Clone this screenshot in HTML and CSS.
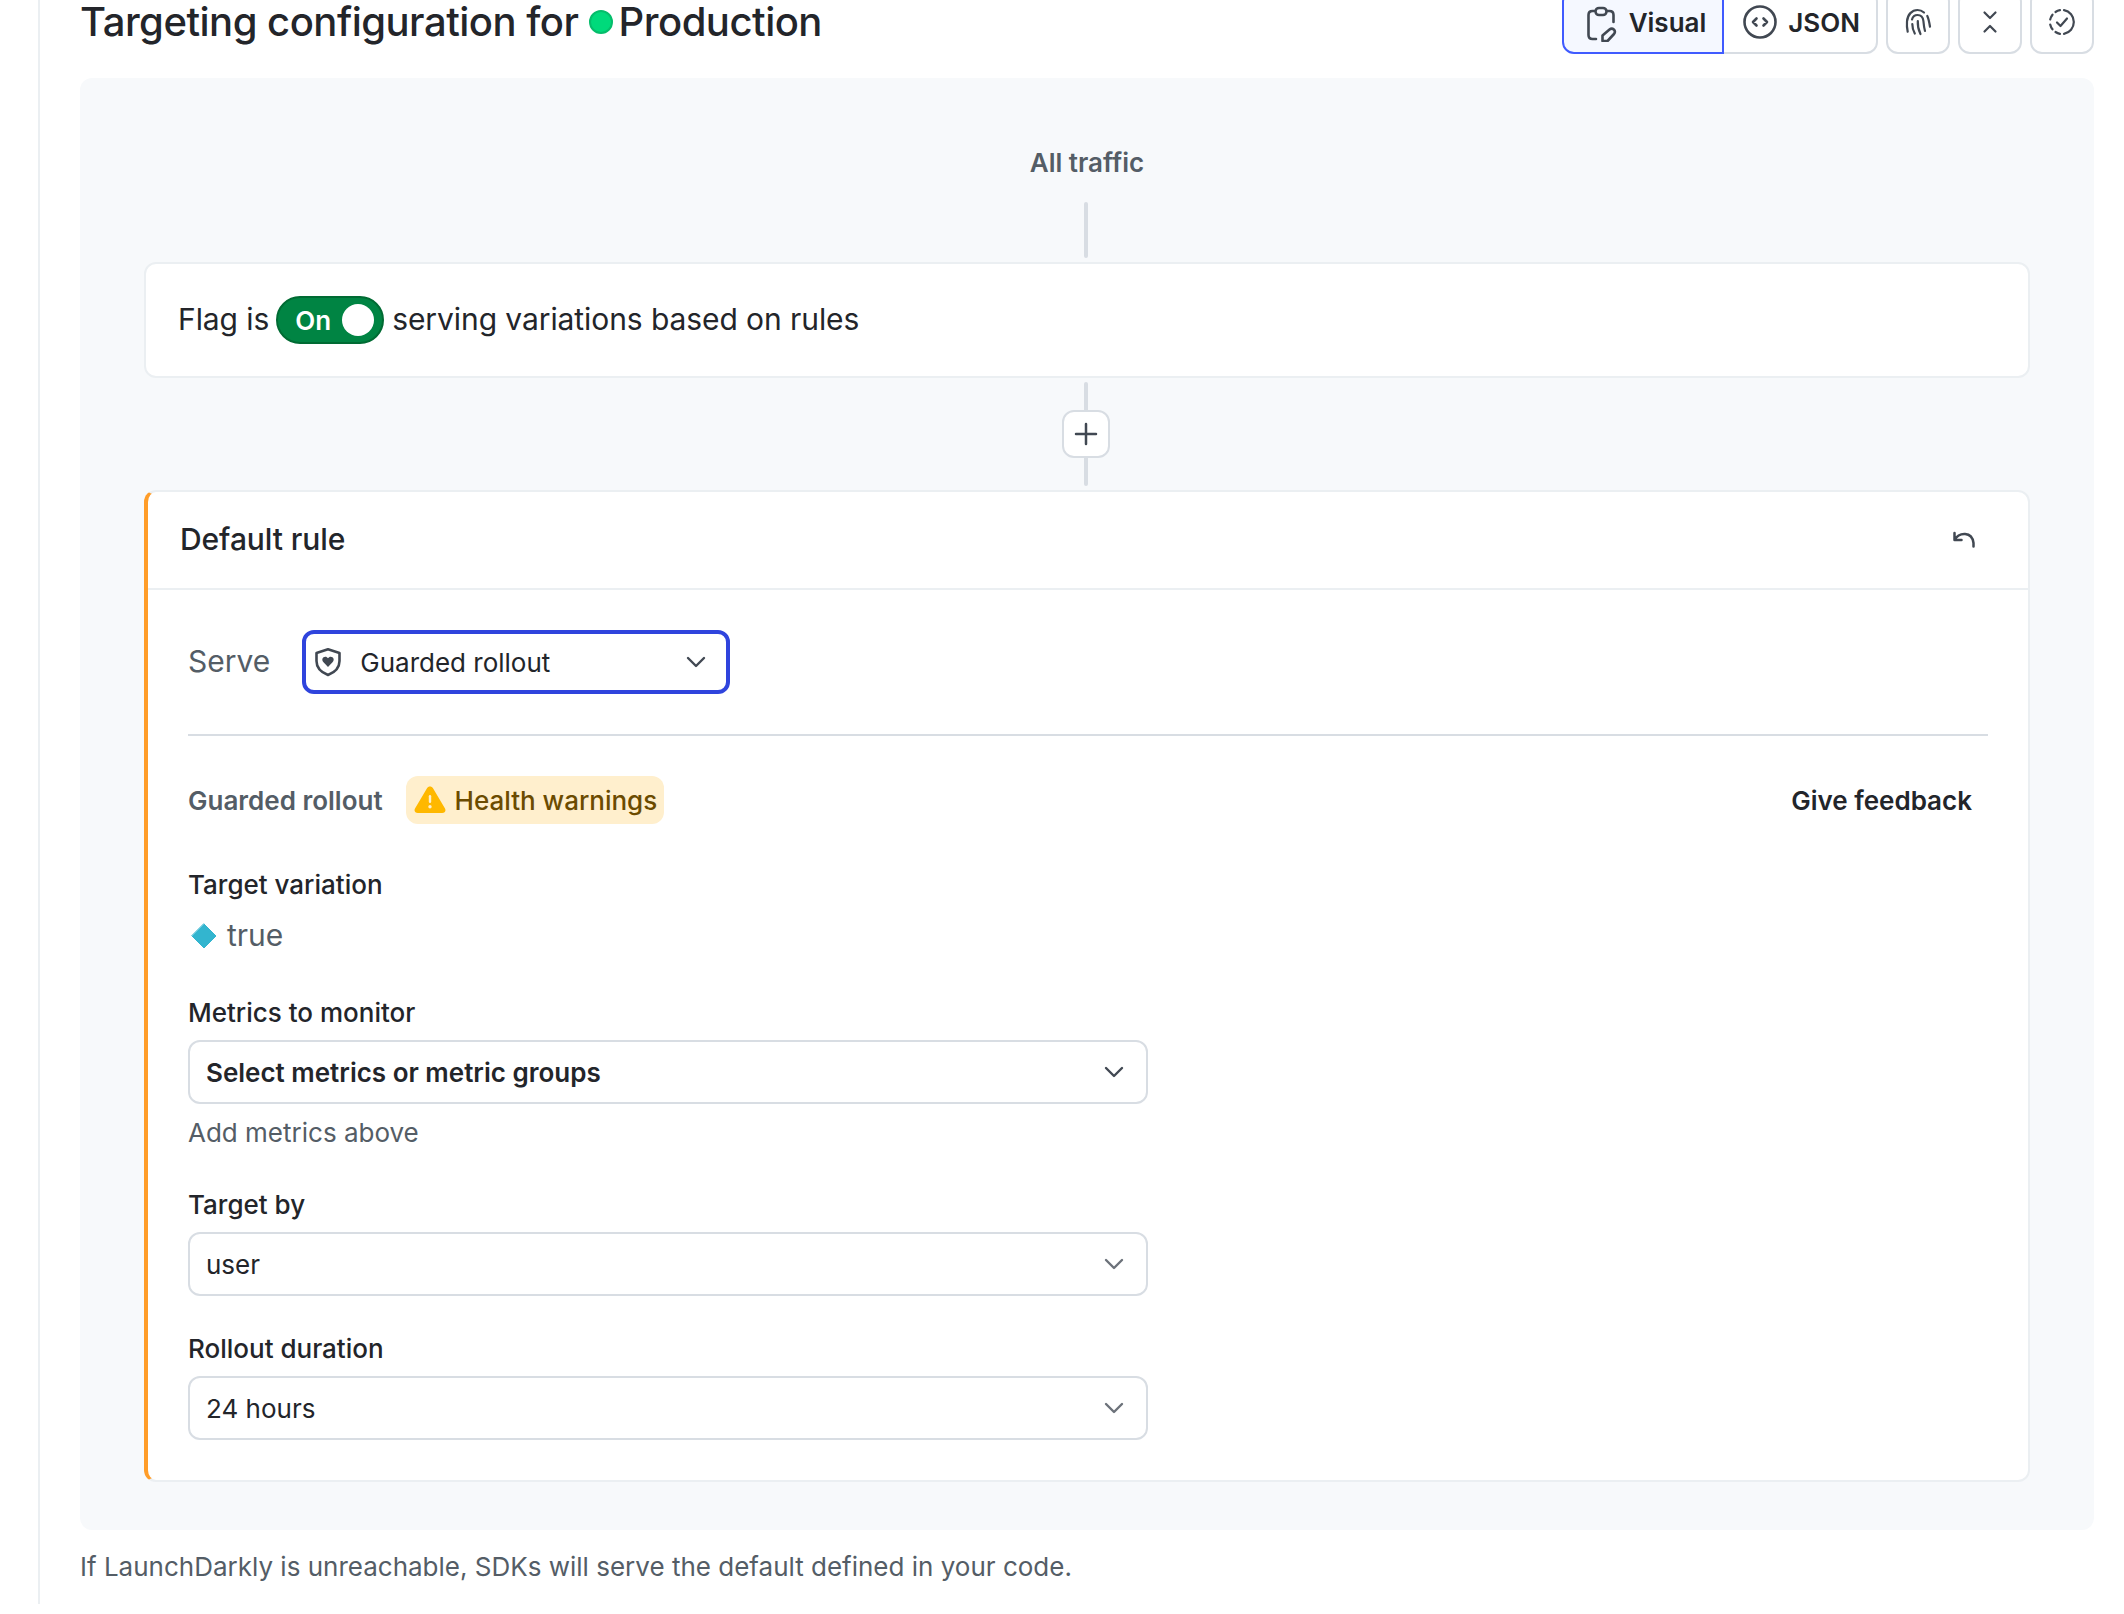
FILE: index.html
```html
<!DOCTYPE html>
<html lang="en">
<head>
  <meta charset="UTF-8">
  <meta name="viewport" content="width=device-width, initial-scale=1.0">
  <title>Targeting configuration</title>
  <link rel="stylesheet" href="styles.css">
</head>
<body>
  <main class="page">
    <header class="page-header">
      <h1>Targeting configuration for <span class="env-dot"></span>Production</h1>
      <div class="toolbar">
        <div class="view-switch">
          <button class="view view-active">
            <svg class="icon-view" viewBox="0 0 40 40">
              <path d="M13 9H11.500C9 9 7.500 10.500 7.500 13V33C7.500 35.500 9 37 11.500 37H15M26 9H28.500C31 9 32.500 10.500 32.500 13V20"/>
              <rect x="14.500" y="6" width="11" height="7" rx="3.500"/>
              <path d="M21.500 39V33.500L28.500 27.500C31.500 25 35.500 28.500 33 32L26.500 39Z"/>
            </svg>
            <span>Visual</span>
          </button>
          <button class="view">
            <svg class="icon-view" viewBox="0 0 40 40">
              <circle cx="20" cy="20" r="15.500"/>
              <path d="M16.500 16.500L13 20L16.500 23.500M23.500 16.500L27 20L23.500 23.500"/>
            </svg>
            <span>JSON</span>
          </button>
        </div>
        <button class="icon-button">
          <svg class="icon-tool" viewBox="0 0 32 32">
            <path d="M5.700 25.700C5 22.500 4.700 19 5 15.500C5.500 8.500 10 4 15.500 4C18 4 20.300 5 22 6.500M25.300 10C26.800 13 27.400 17 28 20.700"/>
            <path d="M10 13.500C10.800 10.500 13 9 15.500 9C19 9 21 11.500 21.400 15C21.700 18.500 22 21.500 23 25"/>
            <path d="M10.300 18C10.300 21.500 11.300 24.800 12.800 27.500M15.800 15C15.500 19.500 16.500 24 18.500 28"/>
          </svg>
        </button>
        <button class="icon-button">
          <svg class="icon-tool" viewBox="0 0 32 32">
            <path d="M10.500 6.500L16 12L21.500 6.500M10.500 25.500L16 20L21.500 25.500"/>
          </svg>
        </button>
        <button class="icon-button">
          <svg class="icon-tool" viewBox="0 0 32 32">
            <path d="M18 4.200A12 12 0 0 1 18 27.800M14 4.200A12 12 0 0 0 9.500 6M6.500 8.700A12 12 0 0 0 4.200 13.500M4.200 18.500A12 12 0 0 0 6.500 23.300M9.500 26A12 12 0 0 0 14 27.800"/>
            <path d="M11 16.500L14.500 20L21 12.500"/>
          </svg>
        </button>
      </div>
    </header>

    <section class="panel">
      <div class="traffic">All traffic</div>
      <div class="connector connector-top"></div>

      <div class="flag-card">
        <span class="flag-text">Flag is</span>
        <button class="toggle"><span>On</span><span class="knob"></span></button>
        <span class="flag-text">serving variations based on rules</span>
      </div>

      <div class="add-rule">
        <div class="connector connector-half"></div>
        <button class="add-button">
          <svg viewBox="0 0 24 24"><path d="M12 2V22M2 12H22"/></svg>
        </button>
        <div class="connector connector-half connector-end"></div>
      </div>

      <div class="rule-card">
        <div class="rule-header">
          <h2>Default rule</h2>
          <button class="undo">
            <svg viewBox="0 0 24 24"><path d="M2.500 5V12H9.500M2.500 12C7 4 20 3 21.500 15V18.500"/></svg>
          </button>
        </div>

        <div class="rule-body">
          <div class="serve">
            <span class="serve-label">Serve</span>
            <div class="select select-focus">
              <svg class="shield" viewBox="0 0 28 30">
                <path class="shield-line" d="M14 2.300L25.500 6V14C25.500 20.500 20.500 25.500 14 28C7.500 25.500 2.500 20.500 2.500 14V6Z"/>
                <path class="shield-heart" d="M14 20L9.500 15.300C7.800 13.500 8 11.200 9.500 10.200C11 9.200 13 9.500 14 11.200C15 9.500 17 9.200 18.500 10.200C20 11.200 20.200 13.500 18.500 15.300Z"/>
              </svg>
              <span>Guarded rollout</span>
              <svg class="chevron" viewBox="0 0 20 12"><path d="M2 2L10 10L18 2"/></svg>
            </div>
          </div>

          <div class="rollout-header">
            <h3>Guarded rollout</h3>
            <span class="badge">
              <svg class="warning" viewBox="0 0 32 28">
                <path class="warning-shape" d="M13 2.200C14.300 0 17.700 0 19 2.200L31 22.500C32.300 25 30.800 27 28.200 27H3.800C1.200 27 -0.300 25 1 22.500Z"/>
                <path class="warning-mark" d="M16 10.300V15.800"/>
                <circle cx="16" cy="20.800" r="1.700"/>
              </svg>
              <span>Health warnings</span>
            </span>
            <a class="feedback">Give feedback</a>
          </div>

          <div class="field">
            <div class="label">Target variation</div>
            <div class="variation">
              <svg class="diamond" viewBox="0 0 26 26"><path d="M13 1L25 13L13 25L1 13Z"/></svg>
              <span>true</span>
            </div>
          </div>

          <div class="field">
            <div class="label">Metrics to monitor</div>
            <div class="select">
              <strong>Select metrics or metric groups</strong>
              <svg class="chevron" viewBox="0 0 20 12"><path d="M2 2L10 10L18 2"/></svg>
            </div>
            <div class="hint">Add metrics above</div>
          </div>

          <div class="field">
            <div class="label">Target by</div>
            <div class="select">
              <span>user</span>
              <svg class="chevron chevron-light" viewBox="0 0 20 12"><path d="M2 2L10 10L18 2"/></svg>
            </div>
          </div>

          <div class="field">
            <div class="label">Rollout duration</div>
            <div class="select">
              <span>24 hours</span>
              <svg class="chevron chevron-light" viewBox="0 0 20 12"><path d="M2 2L10 10L18 2"/></svg>
            </div>
          </div>
        </div>
      </div>
    </section>

    <p class="footnote">If LaunchDarkly is unreachable, SDKs will serve the default defined in your code.</p>
  </main>
</body>
</html>
```

FILE: styles.css
```css
* {
  box-sizing: border-box;
}
body {
  margin: 0;
  background: #fff;
  color: #23252a;
  font-family: Inter, sans-serif;
  font-optical-sizing: none;
  font-size: 26px;
  line-height: 32px;
  overflow: hidden;
}
h1, h2, h3, p {
  margin: 0;
}
button {
  padding: 0;
  background: #fff;
  color: inherit;
  font: inherit;
}
svg {
  display: block;
  flex: none;
  fill: none;
  stroke: #414852;
  stroke-linecap: round;
  stroke-linejoin: round;
}
.page {
  height: 1614px;
  margin-left: 38px;
  padding: 0 30px 0 40px;
  border-left: 2px solid #ebeff2;
}

/* header */
.page-header {
  display: flex;
  justify-content: space-between;
  align-items: center;
  height: 64px;
  margin-top: -10px;
}
h1 {
  display: flex;
  align-items: center;
  font-size: 40px;
  font-weight: 500;
  letter-spacing: -0.5px;
  line-height: 48px;
  white-space: pre;
}
.env-dot {
  width: 24px;
  height: 24px;
  margin-right: 6px;
  border: 2px solid #05bd6b;
  border-radius: 50%;
  background: #00da7b;
}
.toolbar {
  display: flex;
  gap: 8px;
}
.view-switch {
  display: flex;
}
.view {
  display: flex;
  align-items: center;
  gap: 8px;
  height: 64px;
  padding: 0 16px;
  border: 2px solid #d8dde3;
  border-left: none;
  border-radius: 0 12px 12px 0;
  font-weight: 600;
}
.view-active {
  padding-left: 17px;
  border: 2px solid #405bff;
  border-radius: 12px 0 0 12px;
  background: #f5f8ff;
}
.view span,
.select span,
.select strong,
.badge span,
.toggle span:first-child {
  padding-top: 2px;
}
.icon-view {
  width: 40px;
  height: 40px;
  stroke-width: 2.6;
}
.icon-button {
  display: flex;
  align-items: center;
  justify-content: center;
  width: 64px;
  height: 64px;
  border: 2px solid #d8dde3;
  border-radius: 12px;
}
.icon-tool {
  width: 32px;
  height: 32px;
  stroke-width: 2.2;
}

/* flow */
.panel {
  display: flex;
  flex-direction: column;
  height: 1452px;
  margin-top: 24px;
  padding: 69px 64px 0;
  border-radius: 12px;
  background: #f7f9fb;
}
.traffic {
  color: #545d66;
  font-weight: 600;
  text-align: center;
}
.connector {
  width: 4px;
  border-radius: 2px;
  background: #d8dde3;
}
.connector-top {
  align-self: center;
  height: 56px;
  margin: 23px 2px 4px 0;
}
.flag-card {
  display: flex;
  align-items: center;
  gap: 8px;
  height: 116px;
  padding: 0 32px;
  border: 2px solid #ebeff2;
  border-radius: 12px;
  background: #fff;
  font-size: 30px;
}
.flag-text {
  padding-bottom: 2px;
  letter-spacing: -0.08px;
}
.toggle {
  display: flex;
  align-items: center;
  justify-content: space-between;
  width: 108px;
  height: 48px;
  margin-left: -1px;
  padding: 0 8px 0 17px;
  border: 2px solid #006b33;
  border-radius: 24px;
  background: #008443;
  color: #fff;
  font-size: 26px;
  font-weight: 600;
}
.knob {
  width: 32px;
  height: 32px;
  border-radius: 50%;
  background: #fff;
}
.add-rule {
  display: flex;
  flex-direction: column;
  align-items: center;
  padding: 4px 2px 4px 0;
}
.connector-half {
  height: 28px;
  border-radius: 2px 2px 0 0;
}
.connector-end {
  border-radius: 0 0 2px 2px;
}
.add-button {
  display: flex;
  align-items: center;
  justify-content: center;
  width: 48px;
  height: 48px;
  border: 2px solid #d8dde3;
  border-radius: 12px;
}
.add-button svg {
  width: 24px;
  height: 24px;
  stroke-width: 2.5;
}

/* default rule */
.rule-card {
  border: 2px solid #ebeff2;
  border-left: 4px solid #ff9d29;
  border-radius: 12px;
  background: #fff;
}
.rule-header {
  display: flex;
  align-items: center;
  justify-content: space-between;
  height: 98px;
  padding: 0 32px;
  border-bottom: 2px solid #ebeff2;
}
h2 {
  padding-bottom: 2px;
  font-size: 30px;
  font-weight: 500;
  letter-spacing: -0.08px;
}
.undo {
  display: flex;
  justify-content: center;
  width: 64px;
  border: none;
}
.undo svg {
  width: 24px;
  height: 24px;
  stroke-width: 2.5;
}
.rule-body {
  padding: 40px;
}
.serve {
  display: flex;
  align-items: center;
  gap: 32px;
  padding-bottom: 40px;
  border-bottom: 2px solid #d8dde3;
}
.serve-label {
  padding-bottom: 2px;
  color: #545d66;
  font-size: 30px;
}
.select {
  display: flex;
  align-items: center;
  width: 960px;
  height: 64px;
  padding: 0 22px 0 16px;
  border: 2px solid #d8dde3;
  border-radius: 12px;
}
.select-focus {
  width: 428px;
  padding: 0 20px 0 8px;
  border: 4px solid #2f44dd;
}
strong, h3 {
  font-size: 26px;
  font-weight: 600;
}
.shield {
  width: 28px;
  height: 30px;
  margin-right: 18px;
}
.shield-line {
  stroke-width: 2.6;
}
.shield-heart {
  fill: #414852;
  stroke: none;
}
.chevron {
  width: 20px;
  height: 12px;
  margin-left: auto;
  stroke-width: 2.4;
}
.chevron-light {
  stroke: #6c727a;
}
.rollout-header {
  display: flex;
  align-items: center;
  margin: 40px 0 45px;
}
h3 {
  padding-top: 2px;
  color: #545d66;
}
.badge {
  display: flex;
  align-items: center;
  gap: 9px;
  height: 48px;
  margin-left: 23px;
  padding: 0 7px 0 8px;
  border-radius: 12px;
  background: #ffefcd;
  color: #6b4b00;
  font-weight: 500;
}
.warning {
  width: 32px;
  height: 28px;
  stroke: none;
}
.warning-shape {
  fill: #ffb800;
}
.warning-mark {
  stroke: #ffefcd;
  stroke-width: 2.4;
}
.warning circle {
  fill: #ffefcd;
}
.feedback {
  margin: 0 16px 0 auto;
  padding-top: 2px;
  font-weight: 600;
}
.field {
  margin-bottom: 37px;
}
.field:last-child {
  margin-bottom: 0;
}
.label {
  margin-bottom: 11px;
  font-weight: 500;
}
.variation {
  display: flex;
  align-items: center;
  gap: 10px;
  height: 48px;
  padding-left: 3px;
  color: #545d66;
  font-size: 30px;
}
.variation span {
  padding-bottom: 2px;
}
.diamond {
  width: 26px;
  height: 26px;
  fill: #33b5cf;
  stroke: #33b5cf;
}
.hint {
  padding: 13px 0 3px;
  color: #545d66;
}
.footnote {
  margin-top: 21px;
  color: #545d66;
}
```
